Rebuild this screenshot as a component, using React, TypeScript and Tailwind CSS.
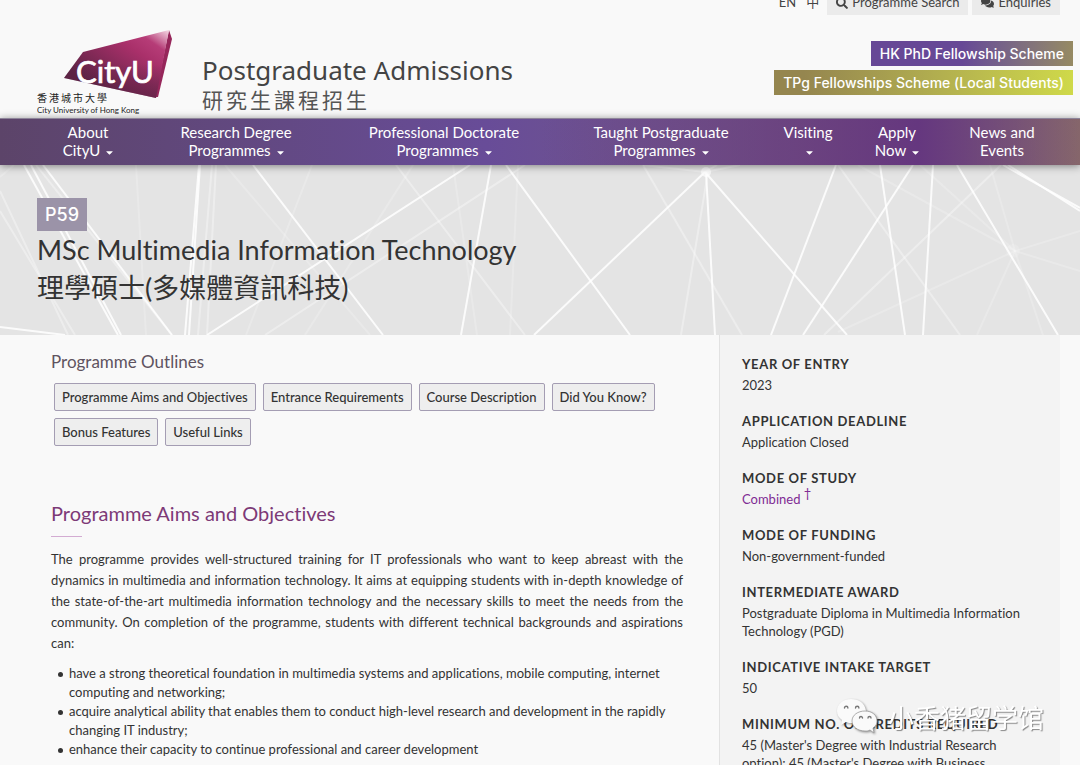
import React from "react";
import { FaSearch, FaComments, FaCaretDown } from "react-icons/fa";

interface NavItem {
  lines: [string, string];
  hasMenu: boolean;
}

interface Fact {
  label: string;
  value: React.ReactNode;
}

// x1, y1, x2, y2
type Line = [number, number, number, number];

const NAV_ITEMS: NavItem[] = [
  { lines: ["About", "CityU"], hasMenu: true },
  { lines: ["Research Degree", "Programmes"], hasMenu: true },
  { lines: ["Professional Doctorate", "Programmes"], hasMenu: true },
  { lines: ["Taught Postgraduate", "Programmes"], hasMenu: true },
  { lines: ["Visiting", ""], hasMenu: true },
  { lines: ["Apply", "Now"], hasMenu: true },
  { lines: ["News and", "Events"], hasMenu: false },
];

const OUTLINES = [
  { id: "aims", label: "Programme Aims and Objectives" },
  { id: "entrance", label: "Entrance Requirements" },
  { id: "courses", label: "Course Description" },
  { id: "did-you-know", label: "Did You Know?" },
  { id: "bonus", label: "Bonus Features" },
  { id: "links", label: "Useful Links" },
];

const OBJECTIVES = [
  "have a strong theoretical foundation in multimedia systems and applications, mobile computing, internet computing and networking;",
  "acquire analytical ability that enables them to conduct high-level research and development in the rapidly changing IT industry;",
  "enhance their capacity to continue professional and career development",
];

const FACTS: Fact[] = [
  { label: "Year of Entry", value: "2023" },
  { label: "Application Deadline", value: "Application Closed" },
  {
    label: "Mode of Study",
    value: (
      <a href="#mode" className="text-[#7f2b94]">
        Combined <sup className="text-[13px] leading-none">†</sup>
      </a>
    ),
  },
  { label: "Mode of Funding", value: "Non-government-funded" },
  { label: "Intermediate Award", value: "Postgraduate Diploma in Multimedia Information Technology (PGD)" },
  { label: "Indicative Intake Target", value: "50" },
  {
    label: "Minimum No. of Credits Required",
    value: "45 (Master's Degree with Industrial Research option); 45 (Master's Degree with Business",
  },
];

const BRIGHT_LINES: Line[] = [
  [24, 0, 118, 170], [31, 0, 121, 170], [43, 0, 172, 170],
  [199, 0, 185, 170], [200, 0, 189, 170], [253, 0, 383, 170],
  [470, 0, 207, 170], [491, 0, 461, 170], [506, 0, 630, 170],
  [534, 170, 705, 7], [705, 7, 847, 170], [706, 7, 715, 170],
  [836, 0, 771, 170], [913, 0, 803, 170], [880, 0, 905, 170],
  [933, 0, 923, 170], [957, 0, 1058, 170], [0, 162, 65, 170],
  [1003, 0, 1080, 43], [1008, 0, 1080, 46],
];

const FAINT_LINES: Line[] = [
  [0, 26, 68, 170], [0, 46, 75, 170], [36, 0, 172, 170],
  [212, 0, 198, 170], [216, 0, 207, 170], [525, 0, 265, 170],
  [396, 0, 525, 170], [708, 7, 681, 170], [643, 0, 705, 7],
  [740, 0, 705, 7], [717, 0, 705, 7], [643, 0, 742, 170],
  [1001, 0, 824, 170], [838, 0, 960, 170],
];

const PALE_LINES: Line[] = [
  [136, 0, 146, 170], [225, 0, 370, 170], [312, 0, 246, 170],
  [413, 0, 305, 170], [453, 0, 477, 170], [518, 0, 510, 170],
  [858, 0, 1015, 86], [920, 0, 1015, 86], [990, 0, 1015, 86],
  [1080, 66, 1015, 86], [1080, 106, 1015, 86], [1043, 170, 1015, 86],
  [977, 170, 1015, 86], [838, 167, 1015, 86], [0, 12, 14, 0],
];

const drawLines = (lines: Line[]) =>
  lines.map(([x1, y1, x2, y2]) => <line key={`${x1}-${y1}-${x2}-${y2}`} x1={x1} y1={y1} x2={x2} y2={y2} />);

const HeroPattern = () => (
  <svg
    className="absolute inset-0 h-full w-full"
    viewBox="0 0 1080 170"
    preserveAspectRatio="xMidYMid slice"
    stroke="#fff"
    aria-hidden="true"
  >
    <g strokeWidth="2" strokeOpacity="0.35">{drawLines(FAINT_LINES)}</g>
    <g strokeWidth="2" strokeOpacity="0.2">{drawLines(PALE_LINES)}</g>
    <g strokeWidth="2" strokeOpacity="0.85">{drawLines(BRIGHT_LINES)}</g>
    <circle cx="706" cy="7" r="5" fill="#fff" fillOpacity="0.7" stroke="none" />
    <circle cx="1013" cy="86" r="7" fill="#fff" fillOpacity="0.15" stroke="none" />
  </svg>
);

const Logo = () => (
  <svg width="136" height="86" viewBox="0 0 136 86" role="img" aria-label="City University of Hong Kong">
    <defs>
      <linearGradient id="logo-fill" x1="0.2" y1="0.75" x2="1" y2="0">
        <stop offset="0" stopColor="#5c2344" />
        <stop offset="0.6" stopColor="#a9306a" />
        <stop offset="0.78" stopColor="#b63c77" />
        <stop offset="1" stopColor="#f6dbe6" />
      </linearGradient>
      <linearGradient id="logo-shade" x1="0" y1="0" x2="0" y2="1">
        <stop offset="0.5" stopColor="#5c2344" stopOpacity="0" />
        <stop offset="1" stopColor="#5c2344" stopOpacity="0.6" />
      </linearGradient>
    </defs>
    <path d="M132 0 L135 9 L121 67 L118 67 Z" fill="#96265a" />
    <path d="M46 22 L132 0 L119 68 L27 48 Z" fill="url(#logo-fill)" />
    <path d="M46 22 L132 0 L119 68 L27 48 Z" fill="url(#logo-shade)" />
    <text x="39" y="53" fontFamily="Lato, sans-serif" fontSize="31" fontWeight="400" fill="#fff" stroke="#fff" strokeWidth="0.7">
      CityU
    </text>
    <text x="0" y="72" fontFamily="'Noto Sans CJK TC', sans-serif" fontSize="10" letterSpacing="2" fill="#222">
      香港城市大學
    </text>
    <text x="0" y="83" fontFamily="Lato, sans-serif" fontSize="8" fill="#222">
      City University of Hong Kong
    </text>
  </svg>
);

const Header = () => (
  <header className="bg-[#f9f9f9]">
    <div className="-mt-2.5 flex h-[25px] items-center justify-end gap-1 pr-5 text-[13px] text-[#444]">
      <a href="#en" className="pr-1.5">EN</a>
      <a href="#zh" className="pr-1">中</a>
      <button type="button" className="flex h-full items-center gap-1 bg-[#ebebeb] px-[9px]">
        <FaSearch size={12} aria-hidden="true" />
        Programme Search
      </button>
      <button type="button" className="flex h-full items-center gap-1 bg-[#ebebeb] px-[9px]">
        <FaComments size={13} aria-hidden="true" />
        Enquiries
      </button>
    </div>
    <div className="flex h-[103px] justify-between pt-[15px] pr-[7px] pl-[37px]">
      <div className="flex">
        <a href="#home"><Logo /></a>
        <a href="#admissions" className="pt-6 pl-[29px] text-[#444]">
          <span className="block font-['Noto_Sans'] text-[26px] leading-[32px]">Postgraduate Admissions</span>
          <span className="block text-[21px] leading-[28px] tracking-[3px] text-[#555]">研究生課程招生</span>
        </a>
      </div>
      <div className="flex flex-col items-end gap-1 pt-[11px] font-['Inter'] text-[14px] leading-[25px] font-medium text-white">
        <a href="#hkphd" className="bg-linear-to-r from-[#674896] from-45% to-[#968a62] px-[9px]">
          HK PhD Fellowship Scheme
        </a>
        <a href="#tpg" className="bg-linear-to-r from-[#95864f] from-10% to-[#cfd949] px-[9px]">
          TPg Fellowships Scheme (Local Students)
        </a>
      </div>
    </div>
  </header>
);

const MainNav = () => (
  <nav className="relative z-10 border-t border-[#8d8499] bg-linear-to-r from-[#5c4469] via-[#684c98] via-45% to-[#86666b] shadow-[0_1px_8px_rgba(0,0,0,0.45)]">
    <ul className="grid grid-cols-[102fr_194fr_222fr_212fr_82fr_96fr_114fr] bg-linear-to-r from-transparent from-50% via-[#65377f] via-85% to-transparent pr-[21px] pl-[37px] text-center text-[15px] leading-[18px] text-white">
      {NAV_ITEMS.map(({ lines, hasMenu }) => (
        <li key={lines[0]}>
          <a href="#menu" className="block pt-1 pb-1.5">
            <span className="block">{lines[0]}</span>
            <span className="flex h-[18px] items-center justify-center gap-1">
              {lines[1]}
              {hasMenu && <FaCaretDown size={11} className="mt-1 -mr-0.5" aria-hidden="true" />}
            </span>
          </a>
        </li>
      ))}
    </ul>
  </nav>
);

const Hero = () => (
  <section className="relative h-[170px] bg-[#e4e4e4]">
    <HeroPattern />
    <div className="relative pt-[33px] pl-[37px] text-[#333]">
      <span className="inline-block bg-[#9b93a8] px-2 font-['Inter'] text-[18px] leading-[33px] font-medium text-white">
        P59
      </span>
      <h1 className="text-[27px] leading-[38px]">
        MSc Multimedia Information Technology
        <br />
        理學碩士(多媒體資訊科技)
      </h1>
    </div>
  </section>
);

const Sidebar = () => (
  <aside className="border-l border-[#e2e2e2] bg-[#f3f3f3] pt-5 pr-5 pl-[22px]">
    <dl className="space-y-[18px] text-[13px] leading-[18px]">
      {FACTS.map(({ label, value }) => (
        <div key={label}>
          <dt className="mb-[3px] font-bold tracking-wider uppercase">{label}</dt>
          <dd>{value}</dd>
        </div>
      ))}
    </dl>
  </aside>
);

const Watermark = () => (
  <div className="pointer-events-none fixed right-9 bottom-[30px] flex items-center gap-2.5 text-white">
    <svg width="42" height="37" viewBox="0 0 42 37" fill="#fafafa" className="drop-shadow-[1px_1px_1px_rgba(0,0,0,0.4)]" aria-hidden="true">
      <path d="M15 1C7 1 1 6 1 13c0 4 2 7 5 9l-1 5 5-3c2 1 4 1 6 1h14V13C29 5 23 1 15 1Z" />
      <path
        d="M29 13c-7 0-13 4-13 10s6 10 13 10c2 0 3 0 5-1l4 3-1-5c3-2 4-4 4-7 0-6-5-10-12-10Z"
        stroke="#999"
        strokeWidth="0.8"
      />
      <g fill="none" stroke="#777" strokeWidth="1.4" strokeLinecap="round">
        <path d="M8.500 10a1.700 1.700 0 0 1 3.400 0M19.500 10a1.700 1.700 0 0 1 3.400 0M23.500 20a1.500 1.500 0 0 1 3 0M32 20a1.500 1.500 0 0 1 3 0" />
      </g>
    </svg>
    <span className="font-['Noto_Sans_CJK_SC'] text-[26px] leading-[37px] [text-shadow:1px_1px_1px_rgba(0,0,0,0.45)]">
      小香猪留学馆
    </span>
  </div>
);

export default function App() {
  return (
    <div className="flex min-h-screen flex-col bg-[#f9f9f9] font-['Lato','Noto_Sans_CJK_TC',sans-serif] text-[#333] [font-variant-ligatures:none]">
      <Header />
      <MainNav />
      <Hero />
      <div className="grid grow grid-cols-[719fr_341fr] pr-5">
        <main className="pt-4 pr-9 pl-[51px] text-[13px]">
          <h2 className="mb-[10px] text-[17px] leading-[22px] text-[#5f5360]">Programme Outlines</h2>
          <div className="flex flex-wrap gap-[7px] pl-[3px] font-medium">
            {OUTLINES.map(({ id, label }) => (
              <a key={id} href={`#${id}`} className="rounded-xs border border-[#a49db3] bg-[#eee] px-[7px] leading-[26px]">
                {label}
              </a>
            ))}
          </div>
          <h2 id="aims" className="mt-[53px] text-[20px] leading-[28px] text-[#7d3a77]">
            Programme Aims and Objectives
          </h2>
          <div className="mt-[9px] mb-3 h-px w-[31px] bg-[#d3acd2]" />
          <p className="mb-2.5 text-justify leading-[21px]">
            The programme provides well-structured training for IT professionals who want to keep abreast with the
            dynamics in multimedia and information technology. It aims at equipping students with in-depth knowledge of
            the state-of-the-art multimedia information technology and the necessary skills to meet the needs from the
            community. On completion of the programme, students with different technical backgrounds and aspirations
            can:
          </p>
          <ul className="pl-[18px] leading-[19px]">
            {OBJECTIVES.map((text) => (
              <li
                key={text}
                className="relative before:absolute before:top-2 before:-left-[11px] before:size-[5px] before:rounded-full before:bg-[#333]"
              >
                {text}
              </li>
            ))}
          </ul>
        </main>
        <Sidebar />
      </div>
      <Watermark />
    </div>
  );
}
